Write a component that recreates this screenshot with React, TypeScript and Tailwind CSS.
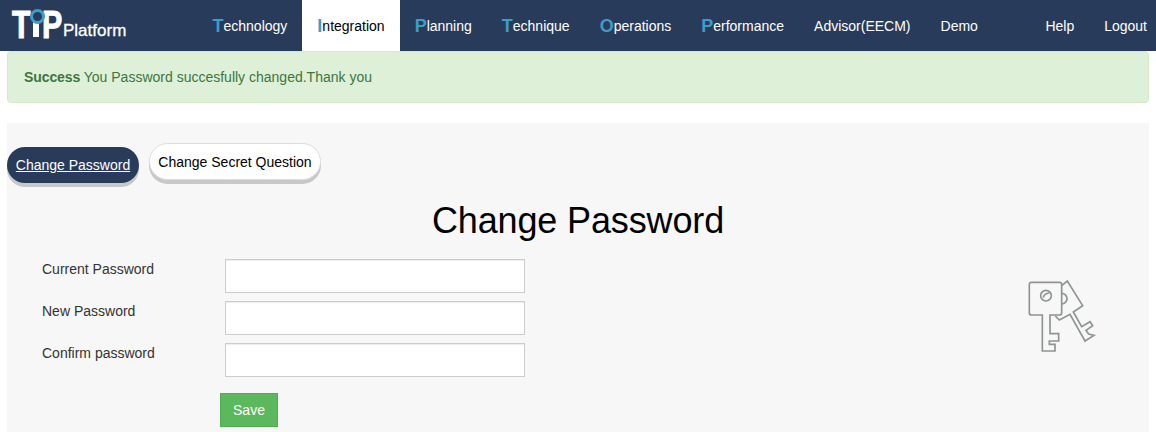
const font = "font-['Liberation_Sans',Arial,sans-serif]";

const navItems = [
  { first: 'T', rest: 'echnology' },
  { first: 'I', rest: 'ntegration', active: true },
  { first: 'P', rest: 'lanning' },
  { first: 'T', rest: 'echnique' },
  { first: 'O', rest: 'perations' },
  { first: 'P', rest: 'erformance' },
];

const fields = ['Current Password', 'New Password', 'Confirm password'];

// the logo is set as text, squeezed sideways, with the ring laid over the i
function Logo() {
  return (
    <div className="relative h-[51px] w-[197.5px] shrink-0 text-white">
      <div className="flex items-end pl-[12px] pt-[8px]">
        <span className="inline-block w-[20px] origin-left scale-x-[0.8] text-[38px] font-bold leading-[34px] [-webkit-text-stroke:1px_white]">T</span>
        <span className="mb-[5px] ml-[1px] h-[15px] w-[6px] bg-white" />
        <span className="ml-[3px] inline-block w-[21px] origin-left scale-x-[0.8] text-[38px] font-bold leading-[34px] [-webkit-text-stroke:1px_white]">P</span>
        <span className="mb-[2px] text-[17px] leading-[18px] [-webkit-text-stroke:0.3px_white]">Platform</span>
      </div>
      <span className="absolute left-[30px] top-[9px] h-[15px] w-[15px] rounded-full border-[3px] border-[#3d9cc9] bg-[#283b5b]" />
    </div>
  );
}

function KeysIcon() {
  return (
    <svg viewBox="0 0 300 300" width="100" height="100" fill="none" stroke="#8f9393" strokeWidth="5" className="mt-[6px] ml-[485px] shrink-0">
      <path d="M64 52H149Q155 52 155 58V144Q155 150 149 150H120V206H146V228H118V238H135V258H97V150H64Q58 150 58 144V58Q58 52 64 52Z" />
      <circle cx="108" cy="92" r="16" />
      <path d="M100 98Q102 86 118 84" />
      <path d="M155 62L172 48L218 122L190 141L215 185L240 170L248 182L228 196L236 207L252 211L225 228L180 148L148 165L136 153" />
      <path d="M155 85A16 16 0 0 1 155 117" />
    </svg>
  );
}

export default function App() {
  return (
    <div className={`h-[432px] w-[1156px] overflow-hidden bg-white text-[14px] leading-[20px] ${font}`}>
      <nav className="flex h-[51px] bg-[#283b5b] text-white">
        <Logo />
        {navItems.map((item) => (
          <a
            key={item.first + item.rest}
            className={`flex h-[51px] items-center px-[15px] ${item.active ? 'bg-white text-black' : ''}`}
          >
            <span className="text-[18px] font-bold leading-[20px] text-[#3d9cc9]">{item.first}</span>
            {item.rest}
          </a>
        ))}
        <a className="flex items-center px-[15px]">Advisor(EECM)</a>
        <a className="flex items-center px-[15px]">Demo</a>
        <div className="ml-auto mr-[-6px] flex">
          <a className="flex items-center px-[15px]">Help</a>
          <a className="flex items-center px-[15px]">Logout</a>
        </div>
      </nav>

      <div className="mx-[7px] mb-[20px] h-[52px] rounded-[4px] border border-[#d6e9c6] bg-[#dff0d8] p-[15px] pl-[16px] text-[#3c763d]">
        <strong className="tracking-[-0.1px]">Success</strong> You Password succesfully changed.Thank you
      </div>

      <section className="mx-[7px] h-[320px] bg-[#f7f7f7]">
        <div className="flex items-start gap-[10px] pt-[20px]">
          <a className="mt-[4px] flex h-[36px] w-[132px] items-center justify-center rounded-full bg-[#283b5b] text-white underline shadow-[0_4px_0_#c8c8c8]">
            Change Password
          </a>
          <a className="flex h-[37px] w-[172px] items-center justify-center rounded-full border border-[#dddddd] bg-white text-black shadow-[0_4px_0_#c8c8c8]">
            Change Secret Question
          </a>
        </div>
        <h1 className="mt-[18px] text-center text-[36px] leading-[40px] tracking-[-0.13px] text-black">Change Password</h1>
        <div className="mt-[18px] flex items-start">
          <form className="w-[518px] shrink-0">
            <div className="flex flex-col gap-[8px] pl-[35px]">
              {fields.map((label) => (
                <div key={label} className="flex items-start">
                  <label className="w-[183px] text-[#333333]">{label}</label>
                  <input className="h-[34px] w-[300px] border border-[#cccccc] bg-white shadow-[inset_0_1px_1px_rgba(0,0,0,0.075)]" />
                </div>
              ))}
            </div>
            <button type="button" className="ml-[213px] mt-[16px] h-[34px] w-[58px] border border-[#4cae4c] bg-[#5cb85c] text-white">
              Save
            </button>
          </form>
          <KeysIcon />
        </div>
      </section>
    </div>
  );
}
